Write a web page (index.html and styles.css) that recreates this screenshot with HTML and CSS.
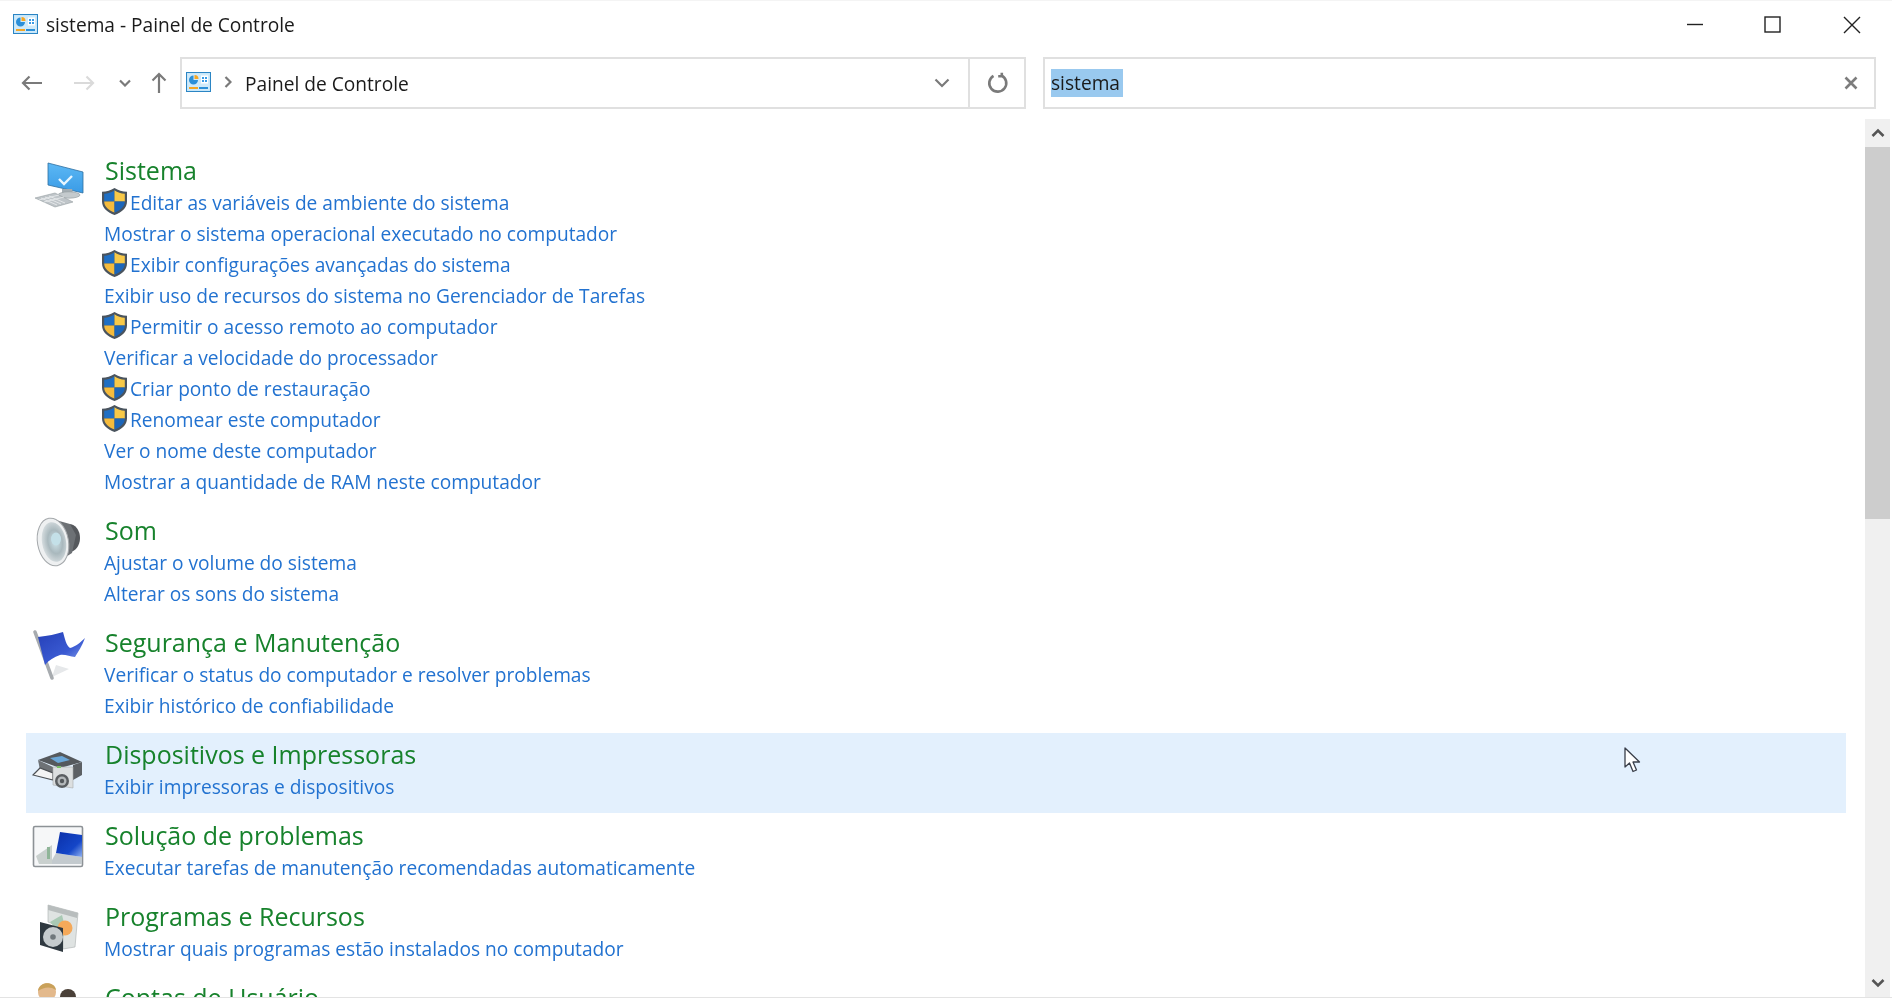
FILE: index.html
```html
<!DOCTYPE html>
<html lang="pt-BR">
<head>
<meta charset="utf-8">
<title>sistema - Painel de Controle</title>
<link rel="stylesheet" href="styles.css">
</head>
<body>
<svg class="defs" aria-hidden="true">
  <defs>
    <linearGradient id="gScreen" x1="0" y1="0" x2="0" y2="1"><stop offset="0" stop-color="#5cb8f5"/><stop offset="1" stop-color="#3a9be6"/></linearGradient>
    <radialGradient id="gCone" cx=".55" cy=".5" r=".6"><stop offset="0" stop-color="#cfe4ea"/><stop offset=".5" stop-color="#a9b8bd"/><stop offset="1" stop-color="#dfe4e6"/></radialGradient>
    <linearGradient id="gFlag" x1="0" y1="0" x2="1" y2="1"><stop offset="0" stop-color="#2540b8"/><stop offset=".6" stop-color="#3a5ad2"/><stop offset="1" stop-color="#93abee"/></linearGradient>
    <linearGradient id="gPanel" x1="0" y1="0" x2="1" y2="1"><stop offset="0" stop-color="#0a2fa8"/><stop offset=".65" stop-color="#1446c8"/><stop offset="1" stop-color="#8fb0ef"/></linearGradient>
    <symbol id="shield" viewBox="0 0 25 27">
      <path d="M12.500 0C9 2.500 4.500 3.500 0 3.800V13.500C0 20 5.500 24.500 12.500 27 19.500 24.500 25 20 25 13.500V3.800C20.500 3.500 16 2.500 12.500 0Z" fill="#4a545e"/>
      <path d="M12.500 2.200V13.500H2.200V5.800C6 5.500 9.500 4.300 12.500 2.200Z" fill="#1f6fc4"/>
      <path d="M12.500 2.200V13.500H22.800V5.800C19 5.500 15.500 4.300 12.500 2.200Z" fill="#f8c948"/>
      <path d="M2.200 13.500H12.500V24.500C7 22.500 2.200 19 2.200 13.500Z" fill="#f5bb3c"/>
      <path d="M22.800 13.500H12.500V24.500C18 22.500 22.800 19 22.800 13.500Z" fill="#1c66ba"/>
    </symbol>
    <symbol id="panel" viewBox="0 0 25 20">
      <rect x=".5" y=".5" width="24" height="19" fill="#bfe3f8" stroke="#2b85c4"/>
      <rect x="1.500" y="1.500" width="22" height="17" fill="#cfeafa"/>
      <path d="M7.500 3.500a4.500 4.500 0 1 0 4.500 4.500H7.500Z" fill="#2b8fd8"/>
      <path d="M8.500 3a4 4 0 0 1 4 4h-4Z" fill="#f5a623"/>
      <path d="M15 3.500h7v8h-7Z" fill="#fff"/>
      <path d="M16 5h2v2h-2ZM19 5h2v2h-2ZM16 8h2v2h-2ZM19 8h2v2h-2Z" fill="#3a9be6"/>
      <rect x="3" y="15" width="9" height="2" fill="#f5a623"/>
      <rect x="13" y="15" width="9" height="2" fill="#2b8fd8"/>
    </symbol>
  </defs>
</svg>

<div class="window">
  <header class="titlebar">
    <svg class="title-icon"><use href="#panel"/></svg>
    <span class="title-text">sistema - Painel de Controle</span>
    <div class="caption">
      <span class="cap-btn"><svg width="18" height="18" viewBox="0 0 18 18"><path d="M1 8.500h16" class="cap-stroke"/></svg></span>
      <span class="cap-btn"><svg width="18" height="18" viewBox="0 0 18 18"><rect x="1" y="1" width="15" height="15" class="cap-stroke"/></svg></span>
      <span class="cap-btn cap-close"><svg width="18" height="18" viewBox="0 0 18 18"><path d="M1 1l16 16M17 1L1 17" class="cap-stroke"/></svg></span>
    </div>
  </header>

  <nav class="navbar">
    <div class="nav-buttons">
      <svg class="nav-back" width="22" height="16" viewBox="0 0 22 16"><path d="M21 8H2M8.500 1.500 2 8l6.500 6.500" class="arrow"/></svg>
      <svg class="nav-forward" width="22" height="16" viewBox="0 0 22 16"><path d="M1 8h19M13.500 1.500 20 8l-6.500 6.500" class="arrow arrow-off"/></svg>
      <svg class="nav-recent" width="12" height="8" viewBox="0 0 12 8"><path d="M1 1.500 6 6.500l5-5" class="arrow"/></svg>
      <svg class="nav-up" width="16" height="22" viewBox="0 0 16 22"><path d="M8 21V2M1.500 8.500 8 2l6.500 6.500" class="arrow"/></svg>
    </div>
    <div class="address">
      <svg class="addr-icon"><use href="#panel"/></svg>
      <svg class="addr-sep" width="8" height="12" viewBox="0 0 8 12"><path d="M1.500 1 6.500 6l-5 5" class="arrow"/></svg>
      <span class="addr-text">Painel de Controle</span>
      <svg class="addr-drop" width="16" height="10" viewBox="0 0 16 10"><path d="M1.500 1.500 8 8l6.500-6.500" class="arrow"/></svg>
      <span class="addr-refresh"><svg class="refresh-icon" width="22" height="22" viewBox="0 0 22 22"><path d="M14.500 3.500A8.500 8.500 0 1 1 6.500 3.800M14.800 .8v3.400h-3.600" class="arrow arrow-thick"/></svg></span>
    </div>
    <div class="search">
      <span class="search-text">sistema</span>
      <svg class="search-clear" width="14" height="14" viewBox="0 0 14 14"><path d="M1.500 1.500l11 11M12.500 1.500l-11 11" class="clear-x"/></svg>
    </div>
  </nav>

  <div class="body">
    <main class="results">
      <section class="row row-system">
        <svg class="row-icon" viewBox="0 0 54 54">
          <path d="M16 8 51 17V38L16 30Z" fill="url(#gScreen)" stroke="#2f6f9f" stroke-width=".8"/>
          <path d="M27 24l5 5 8-8" fill="none" stroke="#e8f6ff" stroke-width="2.400"/>
          <path d="M30 34h10l1 4H30Z" fill="#a4adb2"/>
          <ellipse cx="37" cy="40" rx="11" ry="3.200" fill="#c4cacd" stroke="#8f989c" stroke-width=".6"/>
          <path d="M3 43 23 38 41 47 23 52Z" fill="#bfc5c9" stroke="#959da1" stroke-width=".6"/>
          <path d="M9 43l16 7M13 42l16 7M17 41l16 7M7 45l20-5M12 47l20-5" stroke="#eceff0" stroke-width=".8"/>
        </svg>
        <div class="row-text">
          <h2 class="heading">Sistema</h2>
          <a class="link"><svg class="shield"><use href="#shield"/></svg>Editar as variáveis de ambiente do sistema</a>
          <a class="link">Mostrar o sistema operacional executado no computador</a>
          <a class="link"><svg class="shield"><use href="#shield"/></svg>Exibir configurações avançadas do sistema</a>
          <a class="link">Exibir uso de recursos do sistema no Gerenciador de Tarefas</a>
          <a class="link"><svg class="shield"><use href="#shield"/></svg>Permitir o acesso remoto ao computador</a>
          <a class="link">Verificar a velocidade do processador</a>
          <a class="link"><svg class="shield"><use href="#shield"/></svg>Criar ponto de restauração</a>
          <a class="link"><svg class="shield"><use href="#shield"/></svg>Renomear este computador</a>
          <a class="link">Ver o nome deste computador</a>
          <a class="link">Mostrar a quantidade de RAM neste computador</a>
        </div>
      </section>

      <section class="row row-two">
        <svg class="row-icon" viewBox="0 0 54 54">
          <ellipse cx="37" cy="23" rx="11" ry="14" fill="#55585c"/>
          <path d="M20 4 38 9 44 20 40 38 26 47Z" fill="#6d7175"/>
          <ellipse cx="21" cy="27" rx="15.500" ry="24" transform="rotate(-10 21 27)" fill="#eef0f1" stroke="#a4a8ab"/>
          <ellipse cx="22" cy="27" rx="12" ry="20" transform="rotate(-10 22 27)" fill="url(#gCone)"/>
          <ellipse cx="24" cy="24" rx="5" ry="6.500" fill="#c4e0e8"/>
        </svg>
        <div class="row-text">
          <h2 class="heading">Som</h2>
          <a class="link">Ajustar o volume do sistema</a>
          <a class="link">Alterar os sons do sistema</a>
        </div>
      </section>

      <section class="row row-two">
        <svg class="row-icon" viewBox="0 0 54 54">
          <path d="M20 50 37 42 24 38Z" fill="#e6e8ea"/>
          <path d="M3 5 20 51" stroke="#a7abaf" stroke-width="3.600" stroke-linecap="round"/>
          <path d="M6 10C16 9 24 7 31 5 33 12 34 18 38 21 43 20 49 15 53 11 50 19 46 25 43 30 38 30 33 27 28 28 22 30 17 33 13 38Z" fill="url(#gFlag)"/>
        </svg>
        <div class="row-text">
          <h2 class="heading">Segurança e Manutenção</h2>
          <a class="link">Verificar o status do computador e resolver problemas</a>
          <a class="link">Exibir histórico de confiabilidade</a>
        </div>
      </section>

      <section class="row row-hover">
        <svg class="row-icon" viewBox="0 0 54 54">
          <path d="M6 21 28 13 50 23 28 29Z" fill="#55595d"/>
          <path d="M18 19 30 17 38 21 26 24Z" fill="#6ba7d8"/>
          <path d="M6 21 21 28V39L8 31Z" fill="#6e7276"/>
          <path d="M1 36 8 29 21 34V41Z" fill="#f4f4f4" stroke="#4c5054" stroke-width="1.200"/>
          <path d="M41 26 50 23V36L41 41Z" fill="#5c6064"/>
          <path d="M21 28H41V49L21 46Z" fill="#dcdfe0" stroke="#a8abad" stroke-width=".6"/>
          <rect x="25" y="27" width="4" height="2" fill="#7bc06a"/>
          <circle cx="30" cy="42" r="7" fill="#5a5e61"/>
          <circle cx="30" cy="42" r="4.500" fill="#b5b9bb"/>
          <circle cx="30" cy="42" r="2.200" fill="#55595c"/>
        </svg>
        <div class="row-text">
          <h2 class="heading">Dispositivos e Impressoras</h2>
          <a class="link">Exibir impressoras e dispositivos</a>
        </div>
      </section>

      <section class="row">
        <svg class="row-icon" viewBox="0 0 54 54">
          <rect x="1.500" y="6.500" width="49" height="40" rx="1.500" fill="#f6f7f8" stroke="#8d9296" stroke-width="1.600"/>
          <path d="M4 36 20 25V44H7Z" fill="#c9d0ce"/>
          <path d="M15 27h3v12h-3Z" fill="#8fb598"/>
          <path d="M20 40 24 33 50 37V44H20Z" fill="#c3cace"/>
          <path d="M28 12 50 15V37L24 33Z" fill="url(#gPanel)"/>
        </svg>
        <div class="row-text">
          <h2 class="heading">Solução de problemas</h2>
          <a class="link">Executar tarefas de manutenção recomendadas automaticamente</a>
        </div>
      </section>

      <section class="row">
        <svg class="row-icon" viewBox="0 0 54 54">
          <path d="M16 4 46 12 43 46 31 48V27L16 21Z" fill="#dfe3e2" stroke="#a9aeae" stroke-width=".6"/>
          <path d="M16 4 46 12 45 17 16 9Z" fill="#b8bdbd"/>
          <path d="M18 21 30 14 34 30 31 36Z" fill="#a9c9b4"/>
          <circle cx="33" cy="27" r="7.500" fill="#f4a95a"/>
          <path d="M8 21 31 27V51L8 44Z" fill="#2f3940"/>
          <circle cx="21" cy="36" r="10" fill="#c5cbcd"/>
          <circle cx="21" cy="36" r="2.800" fill="#70787c"/>
        </svg>
        <div class="row-text">
          <h2 class="heading">Programas e Recursos</h2>
          <a class="link">Mostrar quais programas estão instalados no computador</a>
        </div>
      </section>

      <section class="row">
        <svg class="row-icon" viewBox="0 0 54 54">
          <circle cx="36" cy="15" r="8" fill="#4a4038"/>
          <circle cx="15" cy="10" r="9" fill="#e3b98c"/>
          <path d="M6 9C7 -1 23 -1 24 8 18 4 12 5 6 9Z" fill="#c9a15a"/>
        </svg>
        <div class="row-text">
          <h2 class="heading">Contas de Usuário</h2>
        </div>
      </section>
    </main>

    <aside class="scrollbar">
      <span class="sb-btn"><svg width="14" height="10" viewBox="0 0 14 10"><path d="M1.500 8 7 2.500 12.500 8" class="sb-arrow"/></svg></span>
      <div class="sb-track"><div class="sb-thumb"></div></div>
      <span class="sb-btn"><svg width="14" height="10" viewBox="0 0 14 10"><path d="M1.500 2 7 7.500 12.500 2" class="sb-arrow"/></svg></span>
    </aside>
  </div>

  <svg class="cursor" width="17" height="26" viewBox="0 0 17 26"><path d="M1 1V20L5.500 16 9 24.500 12.500 23 9 15H15.500Z" fill="#fff" stroke="#3a3f4a" stroke-width="1.300" stroke-linejoin="round"/></svg>
</div>
</body>
</html>
```

FILE: styles.css
```css
* { box-sizing: border-box; }

html, body {
  margin: 0;
  padding: 0;
  height: 100%;
  overflow: hidden;
  background: #fff;
}

.defs {
  position: absolute;
  width: 0;
  height: 0;
}

.window {
  position: relative;
  display: flex;
  flex-direction: column;
  height: 998px;
  overflow: hidden;
  background: #fff;
  border-top: 1px solid #f4f4f4;
  border-bottom: 1px solid #e3e3e3;
  font-family: "Open Sans", "Noto Sans", "Liberation Sans", sans-serif;
  font-size: 19.15px;
  color: #1a1a1a;
  filter: blur(.4px);
}

/* title bar */
.titlebar {
  display: flex;
  align-items: center;
  flex: none;
  height: 47px;
  padding-left: 13px;
}

.title-icon {
  width: 25px;
  height: 20px;
  margin-top: -1px;
}

.title-text {
  margin-left: 8px;
  margin-top: 1px;
}

.caption {
  display: flex;
  margin-left: auto;
}

.cap-btn {
  display: flex;
  align-items: center;
  justify-content: center;
  width: 78px;
  height: 46px;
}

.cap-close { width: 80px; }

.cap-stroke {
  fill: none;
  stroke: #222;
  stroke-width: 1.400;
}

/* navigation */
.navbar {
  display: flex;
  align-items: stretch;
  flex: none;
  height: 71px;
  padding: 9px 16px 10px 0;
}

.nav-buttons {
  display: flex;
  align-items: center;
  flex: none;
  width: 180px;
  padding-left: 21px;
}

.nav-forward { margin-left: 30px; }
.nav-recent { margin-left: 24px; }
.nav-up { margin-left: 20px; }

.arrow {
  fill: none;
  stroke: #7a7a7a;
  stroke-width: 2.200;
}

.arrow-thick { stroke-width: 2.600; }

.arrow-off { stroke: #dadada; }

.address {
  display: flex;
  align-items: center;
  flex: none;
  width: 846px;
  border: 2px solid #e0e0e0;
  padding-left: 4px;
}

.addr-icon {
  width: 25px;
  height: 20px;
  margin-top: -2px;
}

.addr-sep {
  margin-left: 13px;
  margin-top: -2px;
}

.addr-text {
  margin-left: 13px;
  margin-top: 1px;
}

.addr-drop { margin-left: auto; margin-right: 18px; }

.addr-refresh {
  display: flex;
  align-items: center;
  justify-content: center;
  width: 56px;
  height: 100%;
  border-left: 2px solid #e0e0e0;
}

.refresh-icon { margin-left: 2px; }

.search {
  display: flex;
  align-items: center;
  flex: 1;
  margin-left: 17px;
  padding: 0 16px 0 6px;
  border: 2px solid #e0e0e0;
}

.search-text {
  display: block;
  width: 72px;
  height: 28px;
  line-height: 29px;
  background: #99c9ef;
}

.search-clear { margin-left: auto; margin-top: -1px; }

.clear-x {
  fill: none;
  stroke: #7d7d7d;
  stroke-width: 2.600;
}

/* results */
.body {
  display: flex;
  flex: 1;
  min-height: 0;
}

.results {
  flex: 1;
  min-width: 0;
  padding: 30px 19px 0 26px;
  overflow: hidden;
}

.row {
  display: grid;
  grid-template-columns: 72px 1fr;
  height: 81px;
  padding: 6px 0 0 6px;
}

.row-system { height: 360px; }
.row-two { height: 112px; }

.row-hover {
  height: 80px;
  margin-bottom: 1px;
  background: #e3f0fd;
}

.row-icon {
  width: 54px;
  height: 54px;
}

.row-text { min-width: 0; }

.heading {
  margin: -1px 0 1px 1px;
  font-size: 25px;
  font-weight: 400;
  line-height: 32px;
  color: #17822c;
}

.link {
  display: flex;
  align-items: center;
  height: 31px;
  color: #2272d0;
  white-space: nowrap;
}

.shield {
  flex: none;
  width: 25px;
  height: 27px;
  margin: -2px 3px 0 -2px;
}

/* scrollbar */
.scrollbar {
  display: flex;
  flex-direction: column;
  flex: none;
  width: 25px;
  margin-right: 2px;
  background: #f0f0f0;
}

.sb-btn {
  display: flex;
  align-items: center;
  justify-content: center;
  flex: none;
  height: 28px;
}

.sb-track {
  flex: 1;
}

.sb-thumb {
  height: 372px;
  background: #cdcdcd;
}

.sb-arrow {
  fill: none;
  stroke: #555;
  stroke-width: 2.600;
}

/* mouse pointer lies over the page */
.cursor {
  position: absolute;
  left: 1624px;
  top: 746px;
}
```
